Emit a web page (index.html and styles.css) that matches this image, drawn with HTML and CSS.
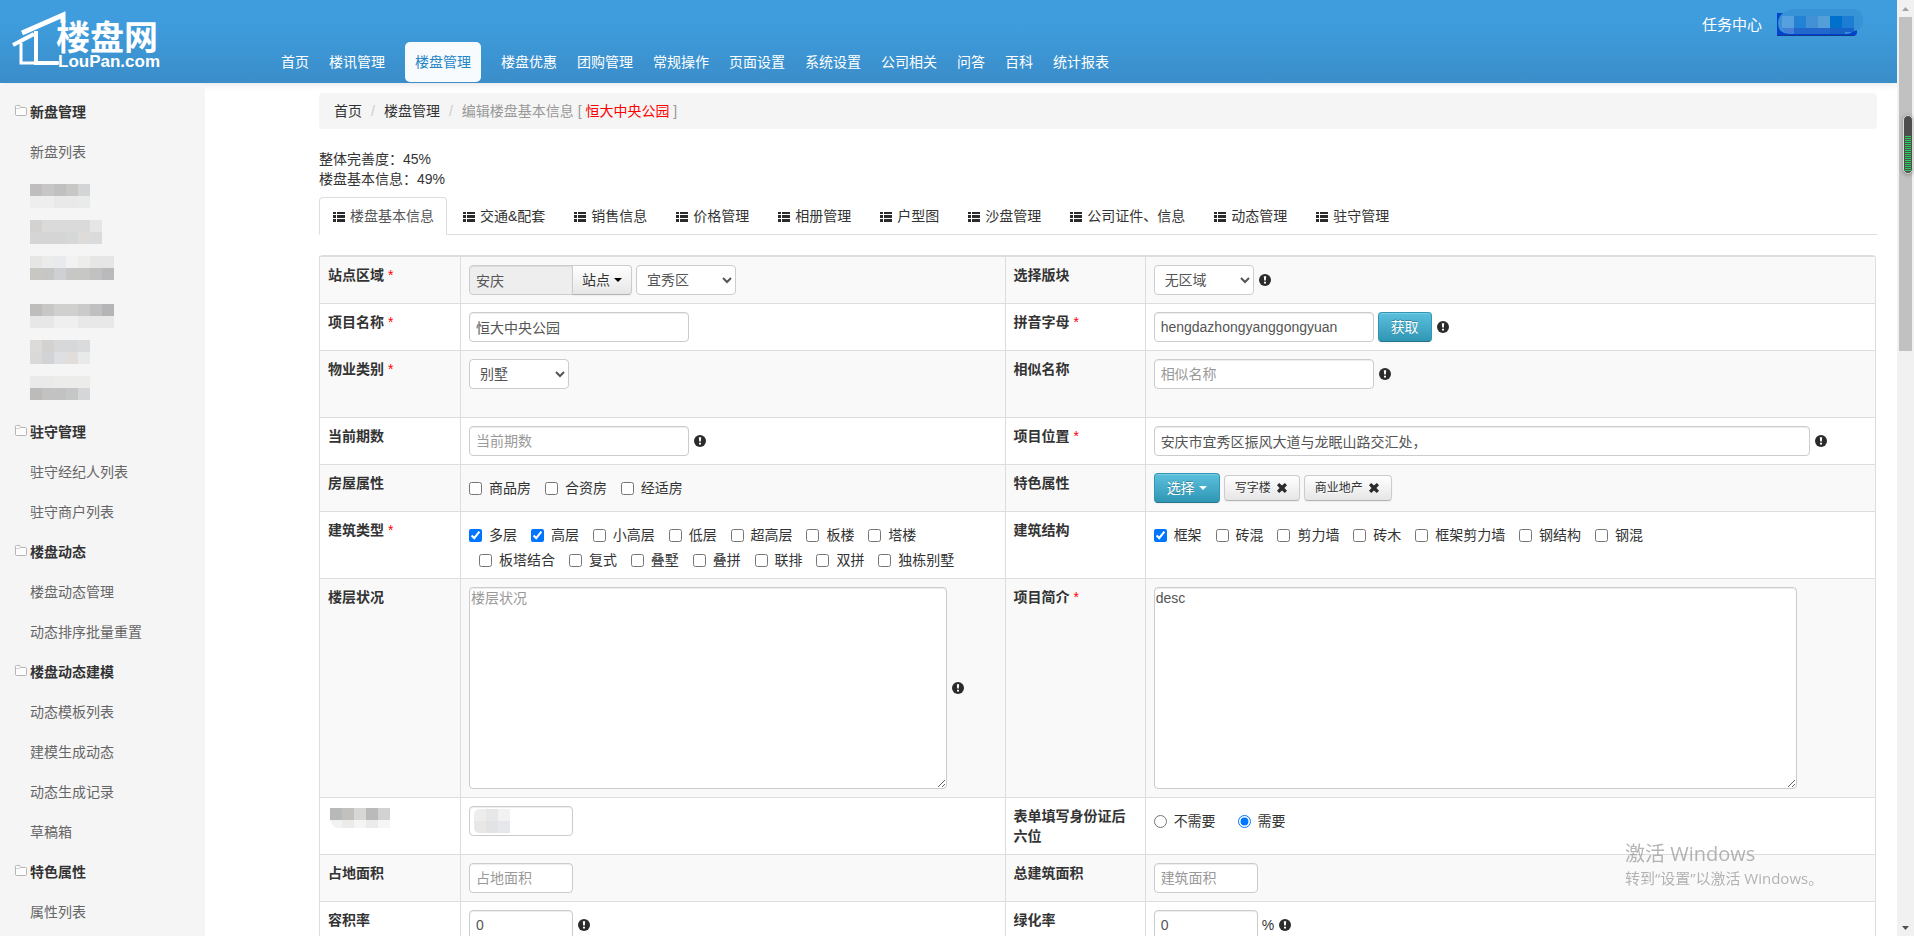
FILE: index.html
```html
<!DOCTYPE html>
<html lang="zh-CN">
<head>
<meta charset="utf-8">
<title>楼盘管理</title>
<link rel="stylesheet" href="styles.css">
</head>
<body>
<svg class="defs" aria-hidden="true">
  <symbol id="list" viewBox="0 0 14 14"><path d="M1 3h3v2H1zM5 3h8v2H5zM1 6h3v3H1zM5 6h8v3H5zM1 10h3v3H1zM5 10h8v3H5z"/></symbol>
  <symbol id="info" viewBox="0 0 14 14"><circle cx="7" cy="7" r="6"/><path class="cut" d="M5.8 3.2h2.4L7.8 7.6H6.2zM6 8.7h2v1.9H6z"/></symbol>
  <symbol id="cross" viewBox="0 0 14 14"><path d="M4.2 2 7 4.6 9.8 2 12 4.2 9.4 7 12 9.8 9.8 12 7 9.4 4.2 12 2 9.8 4.6 7 2 4.2z"/></symbol>
  <symbol id="folder" viewBox="0 0 12 11"><path d="M.5 1.5Q.5.5 1.500.5H4.500L5.500 2.500H10.500Q11.500 2.500 11.500 3.500V9.500Q11.500 10.500 10.500 10.500H1.500Q.5 10.500.5 9.500z" fill="#fcfcfc" stroke="#b5b5b5"/><path d="M1 3.500H5" stroke="#d0d0d0"/></symbol>
</svg>
<div class="window">
<div class="page">
  <header class="header">
    <a class="logo" href="#" aria-label="楼盘网 LouPan.com">
      <svg width="152" height="60" viewBox="0 0 152 60">
        <g fill="none" stroke="#fff" stroke-linejoin="miter">
          <path d="M12 23 53 5V13" stroke-width="5"/>
          <path d="M3 35 24 24" stroke-width="4"/>
          <path d="M11 33V53H49" stroke-width="3"/>
          <path d="M26 21V53H48" stroke-width="4"/>
        </g>
        <text class="logo-name" x="46" y="40">楼盘网</text>
        <text class="logo-site" x="48" y="57">LouPan.com</text>
      </svg>
    </a>
    <nav class="nav">
      <a href="#">首页</a><a href="#">楼讯管理</a><a class="active" href="#">楼盘管理</a><a href="#">楼盘优惠</a><a href="#">团购管理</a><a href="#">常规操作</a><a href="#">页面设置</a><a href="#">系统设置</a><a href="#">公司相关</a><a href="#">问答</a><a href="#">百科</a><a href="#">统计报表</a>
    </nav>
    <div class="user">
      <a href="#">任务中心</a>
      <button class="account" type="button" aria-label="账户">
        <svg width="87" height="32" viewBox="0 0 87 32">
          <path d="M0 5H80V24Q80 28 76 28H0z" fill="#0044cc"/>
          <path d="M0 27.500H77" stroke="#12368f"/>
          <path d="M16 1H74Q86 1 86 12T76 23Q74 26 68 26H14Q1 26 1 15T16 1z" fill="#3792d6"/>
          <path d="M5 8H17V20H5z" fill="#56a0df"/><path d="M17 8H29V20H17z" fill="#2382d3"/><path d="M29 8H41V20H29z" fill="#4291d6"/><path d="M41 8H53V20H41z" fill="#559fd8"/><path d="M53 8H65V20H53z" fill="#0070cd"/><path d="M65 8H77V20H65z" fill="#1d7dd5"/>
          <path d="M5 20H17V26H14Q8 25 5 20z" fill="#467fd7"/><path d="M17 20H53V26H17z" fill="#2267cc"/><path d="M53 20H77V24H68V26H53z" fill="#1763c8"/>
        </svg>
      </button>
    </div>
  </header>

  <div class="body">
    <aside class="sidebar">
      <ul>
        <li class="group"><svg class="folder"><use href="#folder"/></svg>新盘管理</li>
        <li><a href="#">新盘列表</a></li>
        <li class="masked">
          <svg width="84" height="216" viewBox="0 0 7 18" shape-rendering="crispEdges">
            <path d="M0 .5h1" stroke="#bfbdbe"/><path d="M1 .5h1" stroke="#c6c6c6"/><path d="M2 .5h1" stroke="#c0c0c0"/><path d="M3 .5h1" stroke="#c7c7c5"/><path d="M4 .5h1" stroke="#d3d4d6"/>
            <path d="M0 1.500h2" stroke="#eeeeee"/><path d="M2 1.500h2" stroke="#e9e9e9"/><path d="M4 1.500h1" stroke="#e8ebea"/>
            <path d="M0 3.500h1" stroke="#d3d2d0"/><path d="M1 3.500h4" stroke="#dadada"/><path d="M5 3.500h1" stroke="#e6e6e6"/>
            <path d="M0 4.500h3" stroke="#d5d5d5"/><path d="M3 4.500h1" stroke="#d5d8d7"/><path d="M4 4.500h1" stroke="#dedbd9"/><path d="M5 4.500h1" stroke="#dadbdd"/>
            <path d="M0 6.500h1" stroke="#e6e6e4"/><path d="M1 6.500h1" stroke="#ebebeb"/><path d="M2 6.500h1" stroke="#e8eaed"/><path d="M3 6.500h1" stroke="#f2f2f2"/><path d="M4 6.500h1" stroke="#ededeb"/><path d="M5 6.500h2" stroke="#e6e6e6"/>
            <path d="M0 7.500h1" stroke="#c8c7c2"/><path d="M1 7.500h1" stroke="#c6c6c4"/><path d="M2 7.500h1" stroke="#ced0d3"/><path d="M3 7.500h2" stroke="#c7c7c5"/><path d="M5 7.500h1" stroke="#bfc2c1"/><path d="M6 7.500h1" stroke="#bababc"/>
            <path d="M0 10.500h1" stroke="#bebdbb"/><path d="M1 10.500h1" stroke="#c7c7c7"/><path d="M2 10.500h2" stroke="#d0d0ce"/><path d="M4 10.500h1" stroke="#cacaca"/><path d="M5 10.500h1" stroke="#bec1c0"/><path d="M6 10.500h1" stroke="#b5b5b7"/>
            <path d="M0 11.500h2" stroke="#e7e7e7"/><path d="M2 11.500h2" stroke="#efefef"/><path d="M4 11.500h3" stroke="#e8e8e8"/>
            <path d="M0 13.500h1" stroke="#dcdbd9"/><path d="M1 13.500h1" stroke="#d3d2d0"/><path d="M2 13.500h2" stroke="#d7d8da"/><path d="M4 13.500h1" stroke="#dadbdd"/>
            <path d="M0 14.500h1" stroke="#dad9d7"/><path d="M1 14.500h1" stroke="#d2d3d5"/><path d="M2 14.500h1" stroke="#dddfe2"/><path d="M3 14.500h1" stroke="#e0dddb"/><path d="M4 14.500h1" stroke="#e7eae9"/>
            <path d="M0 16.500h2" stroke="#eaeaea"/><path d="M2 16.500h3" stroke="#ececea"/>
            <path d="M0 17.500h1" stroke="#bdbbba"/><path d="M1 17.500h2" stroke="#c2c2c2"/><path d="M3 17.500h1" stroke="#c4c7c6"/><path d="M4 17.500h1" stroke="#d5d6d8"/>
          </svg>
        </li>
        <li class="group"><svg class="folder"><use href="#folder"/></svg>驻守管理</li>
        <li><a href="#">驻守经纪人列表</a></li>
        <li><a href="#">驻守商户列表</a></li>
        <li class="group"><svg class="folder"><use href="#folder"/></svg>楼盘动态</li>
        <li><a href="#">楼盘动态管理</a></li>
        <li><a href="#">动态排序批量重置</a></li>
        <li class="group"><svg class="folder"><use href="#folder"/></svg>楼盘动态建模</li>
        <li><a href="#">动态模板列表</a></li>
        <li><a href="#">建模生成动态</a></li>
        <li><a href="#">动态生成记录</a></li>
        <li><a href="#">草稿箱</a></li>
        <li class="group"><svg class="folder"><use href="#folder"/></svg>特色属性</li>
        <li><a href="#">属性列表</a></li>
      </ul>
    </aside>

    <main class="content">
      <nav class="breadcrumb">
        <a href="#">首页</a><span class="divider">/</span><a href="#">楼盘管理</a><span class="divider">/</span><span class="current">编辑楼盘基本信息 [ <span class="red">恒大中央公园</span> ]</span>
      </nav>
      <div class="progress">
        <div>整体完善度：45%</div>
        <div>楼盘基本信息：49%</div>
      </div>
      <nav class="tabs">
        <a class="active" href="#"><svg class="icon"><use href="#list"/></svg>楼盘基本信息</a>
        <a href="#"><svg class="icon"><use href="#list"/></svg>交通&amp;配套</a>
        <a href="#"><svg class="icon"><use href="#list"/></svg>销售信息</a>
        <a href="#"><svg class="icon"><use href="#list"/></svg>价格管理</a>
        <a href="#"><svg class="icon"><use href="#list"/></svg>相册管理</a>
        <a href="#"><svg class="icon"><use href="#list"/></svg>户型图</a>
        <a href="#"><svg class="icon"><use href="#list"/></svg>沙盘管理</a>
        <a href="#"><svg class="icon"><use href="#list"/></svg>公司证件、信息</a>
        <a href="#"><svg class="icon"><use href="#list"/></svg>动态管理</a>
        <a href="#"><svg class="icon"><use href="#list"/></svg>驻守管理</a>
      </nav>

      <form>
      <table class="form-table">
        <colgroup><col class="col-first"><col class="col-left"><col class="col-label"><col></colgroup>
        <tbody>
        <tr>
          <th><label for="site">站点区域</label> <span class="req">*</span></th>
          <td><div class="field"><div class="append"><input id="site" class="text small" type="text" value="安庆" readonly><button class="btn" type="button">站点<span class="caret"></span></button></div><select class="select" aria-label="区域"><option>宜秀区</option></select></div></td>
          <th><label for="block">选择版块</label></th>
          <td><div class="field"><select id="block" class="select"><option>无区域</option></select><svg class="icon"><use href="#info"/></svg></div></td>
        </tr>
        <tr>
          <th><label for="name">项目名称</label> <span class="req">*</span></th>
          <td><div class="field"><input id="name" class="text" type="text" value="恒大中央公园"></div></td>
          <th><label for="pinyin">拼音字母</label> <span class="req">*</span></th>
          <td><div class="field"><input id="pinyin" class="text" type="text" value="hengdazhongyanggongyuan"><button class="btn btn-info" type="button">获取</button><svg class="icon"><use href="#info"/></svg></div></td>
        </tr>
        <tr>
          <th><label for="kind">物业类别</label> <span class="req">*</span></th>
          <td><div class="field roomy"><select id="kind" class="select"><option>别墅</option></select></div></td>
          <th><label for="alias">相似名称</label></th>
          <td><div class="field"><input id="alias" class="text" type="text" placeholder="相似名称"><svg class="icon"><use href="#info"/></svg></div></td>
        </tr>
        <tr>
          <th><label for="phase">当前期数</label></th>
          <td><div class="field"><input id="phase" class="text" type="text" placeholder="当前期数"><svg class="icon"><use href="#info"/></svg></div></td>
          <th><label for="address">项目位置</label> <span class="req">*</span></th>
          <td><div class="field"><input id="address" class="text wide" type="text" value="安庆市宜秀区振风大道与龙眠山路交汇处，"><svg class="icon"><use href="#info"/></svg></div></td>
        </tr>
        <tr>
          <th>房屋属性</th>
          <td>
            <label class="check"><input type="checkbox">商品房</label>
            <label class="check"><input type="checkbox">合资房</label>
            <label class="check"><input type="checkbox">经适房</label>
          </td>
          <th>特色属性</th>
          <td><div class="field"><button class="btn btn-info" type="button">选择<span class="caret"></span></button><button class="btn tag" type="button">写字楼<svg class="icon"><use href="#cross"/></svg></button><button class="btn tag" type="button">商业地产<svg class="icon"><use href="#cross"/></svg></button></div></td>
        </tr>
        <tr>
          <th>建筑类型 <span class="req">*</span></th>
          <td>
            <label class="check"><input type="checkbox" checked>多层</label>
            <label class="check"><input type="checkbox" checked>高层</label>
            <label class="check"><input type="checkbox">小高层</label>
            <label class="check"><input type="checkbox">低层</label>
            <label class="check"><input type="checkbox">超高层</label>
            <label class="check"><input type="checkbox">板楼</label>
            <label class="check"><input type="checkbox">塔楼</label>
            <label class="check"><input type="checkbox">板塔结合</label>
            <label class="check"><input type="checkbox">复式</label>
            <label class="check"><input type="checkbox">叠墅</label>
            <label class="check"><input type="checkbox">叠拼</label>
            <label class="check"><input type="checkbox">联排</label>
            <label class="check"><input type="checkbox">双拼</label>
            <label class="check"><input type="checkbox">独栋别墅</label>
          </td>
          <th>建筑结构</th>
          <td>
            <label class="check"><input type="checkbox" checked>框架</label>
            <label class="check"><input type="checkbox">砖混</label>
            <label class="check"><input type="checkbox">剪力墙</label>
            <label class="check"><input type="checkbox">砖木</label>
            <label class="check"><input type="checkbox">框架剪力墙</label>
            <label class="check"><input type="checkbox">钢结构</label>
            <label class="check"><input type="checkbox">钢混</label>
          </td>
        </tr>
        <tr>
          <th><label for="floors">楼层状况</label></th>
          <td><div class="field"><textarea id="floors" class="area area-left" rows="10" placeholder="楼层状况"></textarea><svg class="icon"><use href="#info"/></svg></div></td>
          <th><label for="desc">项目简介</label> <span class="req">*</span></th>
          <td><div class="field"><textarea id="desc" class="area" rows="10">desc</textarea></div></td>
        </tr>
        <tr>
          <th>
            <svg class="mask-label" width="66" height="24" viewBox="0 0 66 24">
              <path d="M2 2h12v12H2z" fill="#b6b8ba"/><path d="M14 2h12v12H14z" fill="#c3c1be"/><path d="M26 2h12v12H26z" fill="#d7d7d5"/><path d="M38 2h12v12H38z" fill="#bababa"/><path d="M50 2h12v12H50z" fill="#d1d2d4"/>
              <path d="M2 14h12v8H8Q4 20 2 14z" fill="#f1f3f2"/><path d="M14 14h12v8H14z" fill="#ebebe9"/><path d="M26 14h12v8H26z" fill="#f5f5f5"/><path d="M38 14h12v8H38z" fill="#ebebeb"/><path d="M50 14h12v8H50z" fill="#f5f6f6"/>
            </svg>
          </th>
          <td><div class="field masked-input"><input class="text small" type="text" aria-label="数值">
            <svg class="mask-value" width="36" height="24" viewBox="0 0 36 24"><path d="M6 0h6v12H0V6Q0 0 6 0z" fill="#eeedeb"/><path d="M12 0h12v12H12z" fill="#e7e7e8"/><path d="M24 0h12v12H24z" fill="#f2f2f3"/><path d="M0 12h12v12H6Q0 24 0 18z" fill="#e8e7e5"/><path d="M12 12h12v12H12z" fill="#e2e3e4"/><path d="M24 12h12v12H24z" fill="#e6e7ea"/></svg>
          </div></td>
          <th>表单填写身份证后六位</th>
          <td>
            <label class="check radio"><input type="radio" name="idcard">不需要</label>
            <label class="check radio"><input type="radio" name="idcard" checked>需要</label>
          </td>
        </tr>
        <tr>
          <th><label for="land">占地面积</label></th>
          <td><div class="field"><input id="land" class="text small" type="text" placeholder="占地面积"></div></td>
          <th><label for="total">总建筑面积</label></th>
          <td><div class="field"><input id="total" class="text small" type="text" placeholder="建筑面积"></div></td>
        </tr>
        <tr>
          <th><label for="ratio">容积率</label></th>
          <td><div class="field"><input id="ratio" class="text small" type="text" value="0"><svg class="icon"><use href="#info"/></svg></div></td>
          <th><label for="green">绿化率</label></th>
          <td><div class="field"><input id="green" class="text small" type="text" value="0">%<svg class="icon"><use href="#info"/></svg></div></td>
        </tr>
        </tbody>
      </table>
      </form>
    </main>
  </div>
</div>
<div class="scrollbar">
  <svg class="arrow up" viewBox="0 0 17 17"><path d="M5 11 8.500 7 12 11z"/></svg>
  <div class="thumb"></div>
  <svg class="arrow down" viewBox="0 0 17 17"><path d="M5 7 8.500 11 12 7z"/></svg>
  <div class="meter"><div class="meter-level"></div></div>
</div>
</div>
<div class="notice">
  <div class="notice-title">激活 Windows</div>
  <div>转到“设置”以激活 Windows。</div>
</div>
</body>
</html>
```

FILE: styles.css
```css
* { box-sizing: border-box; }
body {
  margin: 0;
  font: 14px/20px "Liberation Sans", "Noto Sans CJK SC", sans-serif;
  color: #333;
  background: #fff;
}
a { color: inherit; text-decoration: none; }
.defs { position: absolute; width: 0; height: 0; }
.window { display: flex; height: 100vh; overflow: hidden; }
.page { flex: 1; min-width: 0; overflow: hidden; }

/* header */
.header {
  display: flex;
  height: 83px;
  color: #fff;
  background: linear-gradient(#3f9ddd, #3f9ddd 25%, #3a8dc9);
  box-shadow: 0 1px 8px rgba(0, 0, 0, .12);
}
.logo { width: 271px; padding: 10px 0 0 10px; }
.logo svg { display: block; }
.logo-name { font: bold 34px "Noto Sans CJK SC", sans-serif; fill: #fff; }
.logo-site { font: bold 17px "Liberation Sans", sans-serif; fill: #fff; }
.nav { display: flex; align-self: flex-end; padding-bottom: 1px; }
.nav a { padding: 10px; line-height: 20px; }
.nav .active {
  margin: 0 10px;
  color: #2485c7;
  background: #f8fbfe;
  border-radius: 5px;
}
.user { display: flex; margin-left: auto; padding: 8px 33px 0 0; gap: 15px; font-size: 15px; line-height: 34px; }
.account { padding: 0; border: 0; background: none; height: 32px; }
.account svg { display: block; }

/* sidebar */
.body { display: flex; }
.sidebar {
  width: 205px;
  margin-top: 1px;
  flex: none;
  background: #f5f5f5;
  border-radius: 4px;
}
.sidebar ul { margin: 0; padding: 8px 0; list-style: none; }
.sidebar li { padding-left: 30px; line-height: 40px; color: #666; }
.sidebar .group { display: flex; padding-left: 15px; gap: 3px; font-weight: bold; color: #333; }
.folder { width: 12px; height: 11px; margin-top: 13px; }
.sidebar .masked { height: 240px; padding-top: 12px; }
.masked svg { display: block; }

/* content */
.content { flex: 1; min-width: 0; padding: 10px 20px 40px 114px; }
.breadcrumb { padding: 8px 15px; background: #f5f5f5; border-radius: 4px; }
.divider { margin: 0 9px; color: #ccc; }
.current { color: #999; }
.red { color: #f00; }
.progress { margin: 20px 0 8px; }
.tabs { display: flex; gap: 2px; border-bottom: 1px solid #ddd; margin-bottom: 20px; }
.tabs a {
  display: flex;
  align-items: center;
  gap: 4px;
  padding: 8px 12px;
  margin-bottom: -1px;
  border: 1px solid transparent;
  border-radius: 4px 4px 0 0;
}
.tabs .active { color: #555; background: #fff; border-color: #ddd #ddd #fff; }
.icon { width: 14px; height: 14px; flex: none; fill: #2b2b2b; }
.cut { fill: #fff; }

/* form */
.form-table {
  width: calc(100% - 1px);
  table-layout: fixed;
  border: 1px solid #ddd;
  border-left: 0;
  border-spacing: 0;
  border-radius: 4px;
}
.col-first { width: 141px; }
.col-left { width: 35%; }
.col-label { width: 9%; }
.form-table th, .form-table td {
  padding: 8px;
  text-align: left;
  vertical-align: top;
  border-top: 1px solid #ddd;
  border-left: 1px solid #ddd;
}
.form-table tr:nth-child(odd) > * { background: #f9f9f9; }
.req { color: #f00; font-weight: normal; }
.field { display: flex; align-items: center; gap: 4px; }
.roomy { margin-bottom: 20px; }
.append { display: flex; }
.text, .select, .area {
  font: inherit;
  color: #555;
  background: #fff;
  border: 1px solid #ccc;
  border-radius: 4px;
  box-shadow: inset 0 1px 1px rgba(0, 0, 0, .075);
}
.text { width: 220px; height: 30px; padding: 4px 6px; }
.small { width: 104px; }
.wide { width: 92%; }
.text[readonly] { background: #eee; border-radius: 4px 0 0 4px; }
.select { width: 100px; height: 30px; padding: 4px 6px; box-shadow: none; }
.area { display: block; width: calc(100% - 70px); padding: 0 1px; resize: both; }
.area-left { width: calc(100% - 50px); }
::placeholder { color: #999; opacity: 1; }
.btn {
  display: flex;
  align-items: center;
  gap: 4px;
  padding: 4px 12px;
  font: inherit;
  color: #333;
  text-shadow: 0 1px 1px rgba(255, 255, 255, .75);
  background: linear-gradient(#fff, #e6e6e6);
  border: 1px solid #ccc;
  border-bottom-color: #b3b3b3;
  border-radius: 4px;
  box-shadow: inset 0 1px 0 rgba(255, 255, 255, .2), 0 1px 2px rgba(0, 0, 0, .05);
}
.append .btn { margin-left: -1px; padding: 4px 9px; border-radius: 0 4px 4px 0; }
.btn-info {
  color: #fff;
  text-shadow: 0 -1px 0 rgba(0, 0, 0, .25);
  background: linear-gradient(#5bc0de, #2f96b4);
  border-color: #2f96b4 #2f96b4 #24748c;
}
.tag { padding: 2px 10px; font-size: 12px; }
.caret { border: 4px solid transparent; border-top-color: #000; border-bottom: 0; }
.btn-info .caret { border-top-color: #fff; }
.check { display: inline-block; padding: 5px 0 0 20px; }
.check + .check { margin-left: 10px; }
.radio + .radio { margin-left: 18px; }
.check input { float: left; width: 13px; height: 13px; margin: 4px 0 0 -20px; }
.mask-label { display: block; }
.masked-input { position: relative; }
.mask-value { position: absolute; left: 5px; top: 3px; }

/* scrollbar */
.scrollbar {
  position: relative;
  display: flex;
  flex-direction: column;
  width: 17px;
  background: #f1f1f1;
}
.arrow { width: 17px; height: 17px; flex: none; }
.up { fill: #a3a3a3; }
.down { margin-top: auto; fill: #505050; }
.thumb { height: 334px; margin: 0 2px; background: #c1c1c1; }
.meter {
  position: absolute;
  top: 115px;
  right: 1px;
  width: 10px;
  height: 59px;
  padding: 20px 1px 2px;
  background: #4d4d4d;
  border: 1px solid #d9d9d9;
  border-radius: 5px;
  box-shadow: 0 1px 4px rgba(0, 0, 0, .3);
}
.meter-level { height: 100%; background: repeating-linear-gradient(#2ecc5b 0 1px, #3f5a48 1px 2px); }

/* system notice */
.notice {
  position: fixed;
  right: 92px;
  bottom: 46px;
  width: 197px;
  font: 15px/24px "Open Sans", "Noto Sans CJK SC", sans-serif;
  color: rgba(120, 120, 120, .55);
  white-space: nowrap;
  pointer-events: none;
}
.notice-title { font-size: 20px; }
```
